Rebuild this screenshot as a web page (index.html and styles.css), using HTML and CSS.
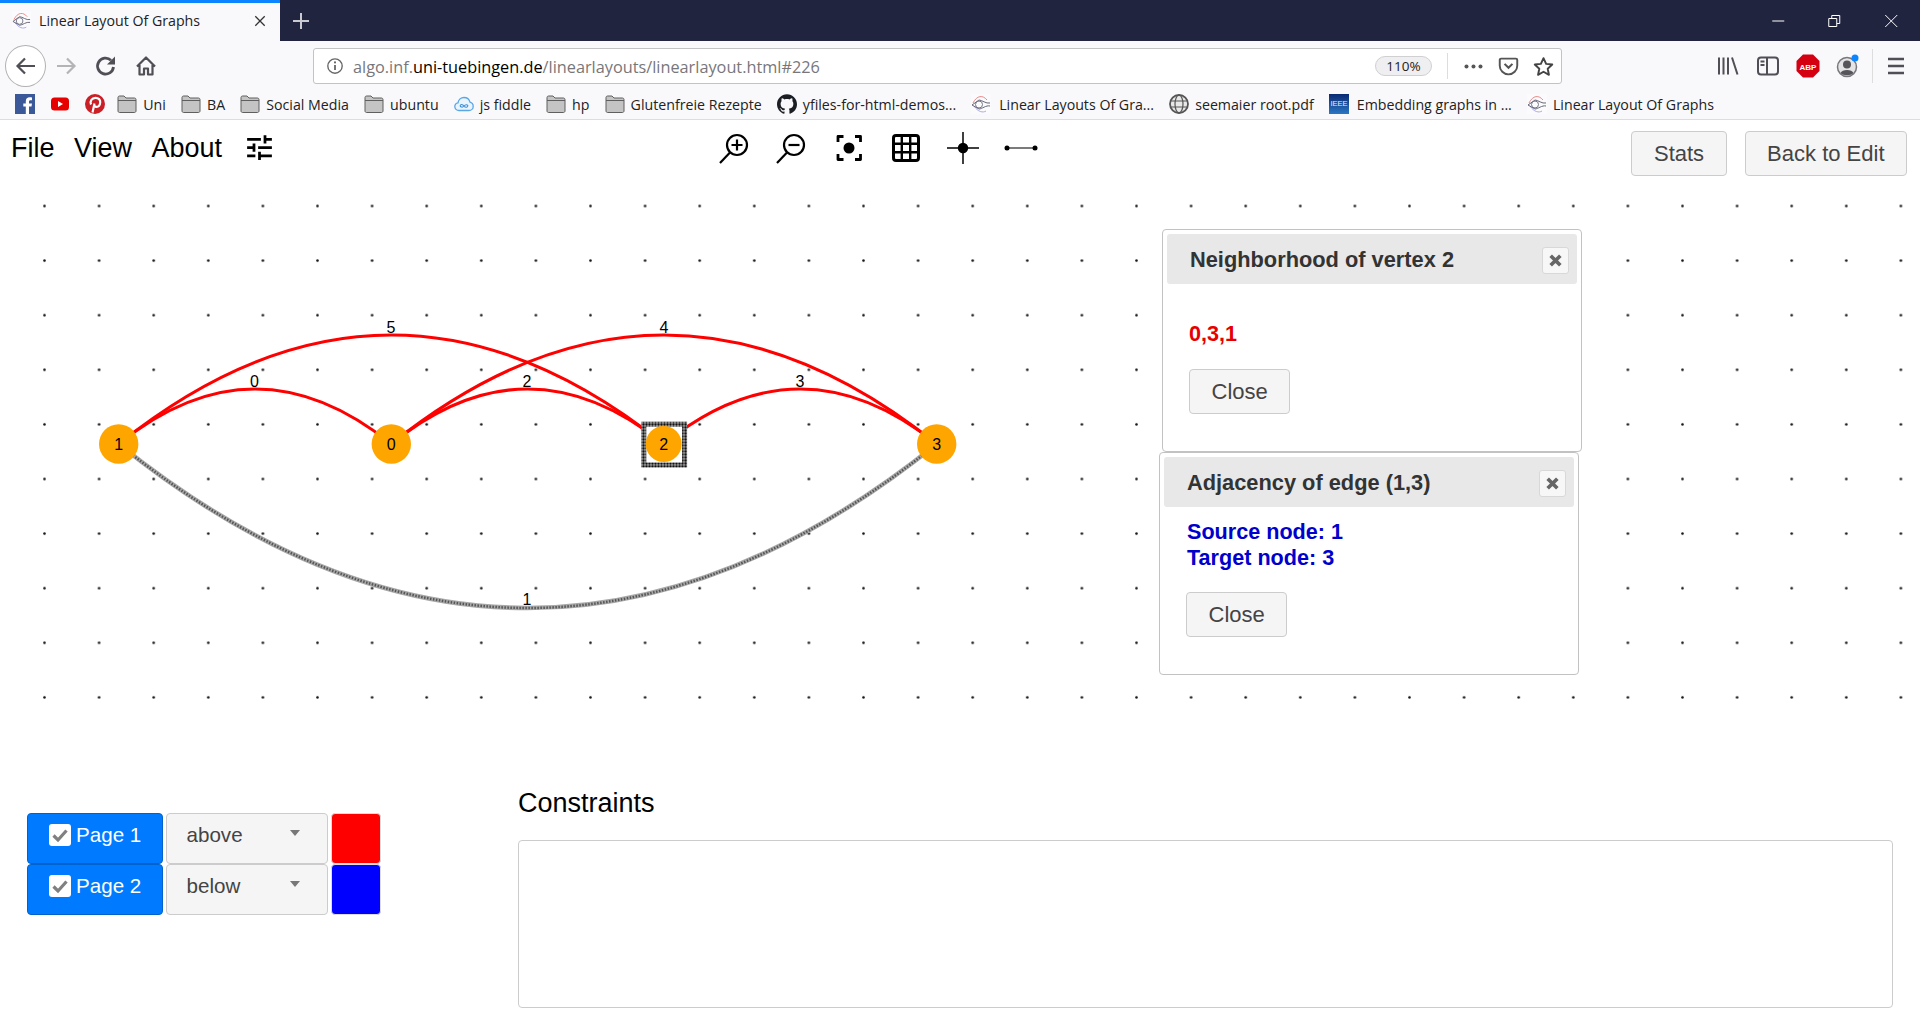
FILE: index.html
```html
<!DOCTYPE html>
<html lang="en">

<head>
    <meta charset="UTF-8">
    <meta name="viewport" content="width=device-width, initial-scale=1.0">
    <title>Linear Layout Of Graphs</title>
    <link rel="stylesheet" href="styles.css">
</head>

<body>

    <svg class="defs" width="0" height="0">
        <defs>
            <symbol id="favicon" viewBox="0 0 20 20">
                <rect width="20" height="20" fill="#fbfbfd" />
                <path d="M2 9C6 1 12 1 16 6" fill="none" stroke="#e88a8a" stroke-width="1" />
                <path d="M3 12C7 18 12 19 15 17" fill="none" stroke="#a9a9e8" stroke-width="1" />
                <path d="M1 11L8 6M1 11L8 15M8 6C11 6 15 10 19 9M8 15C11 15 15 11 19 12" fill="none" stroke="#667" stroke-width="1" />
                <circle cx="8" cy="10.500" r="3.500" fill="none" stroke="#778" stroke-width="1" />
            </symbol>
            <symbol id="folder" viewBox="0 0 20 20">
                <path d="M1 3.500C1 2.700 1.700 2 2.500 2H7L9 4H17.500C18.300 4 19 4.700 19 5.500V17C19 17.800 18.300 18.500 17.500 18.500H2.500C1.700 18.500 1 17.800 1 17Z" fill="#c4c4c4" stroke="#5f5f5f" stroke-width="1" />
                <path d="M1 6.500H19" stroke="#5f5f5f" stroke-width="1" />
            </symbol>
            <pattern id="selectedBorder" patternUnits="userSpaceOnUse" width="3" height="3">
                <rect width="3" height="3" fill="#999" />
                <circle cx="1.500" cy="1.500" r="1.150" fill="#111" />
            </pattern>
            <pattern id="gridDots" patternUnits="userSpaceOnUse" x="17.200" y="178.700" width="54.600" height="54.600">
                <circle cx="27.300" cy="27.300" r="1.300" fill="#111" />
            </pattern>
            <linearGradient id="ieeeFill" x1="0" y1="0" x2="0" y2="1">
                <stop offset="0" stop-color="#0a2a73" />
                <stop offset="1" stop-color="#2a77c4" />
            </linearGradient>
        </defs>
    </svg>

    <header class="browser">
        <div class="tabbar">
            <div class="tab">
                <svg class="tab-icon"><use href="#favicon" /></svg>
                <span class="tab-title">Linear Layout Of Graphs</span>
                <svg class="tab-close" viewBox="0 0 14 14"><path d="M1.500 1.500L12.500 12.500M12.500 1.500L1.500 12.500" stroke="#333" stroke-width="1.500" /></svg>
            </div>
            <svg class="new-tab" viewBox="0 0 18 18"><path d="M9 1V17M1 9H17" stroke="#c9c9d2" stroke-width="2" /></svg>
            <div class="window-controls">
                <svg viewBox="0 0 14 14"><path d="M1 7H13" stroke="#fff" stroke-width="1" /></svg>
                <svg viewBox="0 0 14 14"><path d="M1.500 4.500H9.500V12.500H1.500ZM4.500 4.500V1.500H12.500V9.500H9.500" fill="none" stroke="#fff" stroke-width="1" /></svg>
                <svg viewBox="0 0 14 14"><path d="M1 1L13 13M13 1L1 13" stroke="#fff" stroke-width="1" /></svg>
            </div>
        </div>

        <div class="navbar">
            <div class="back-btn">
                <svg viewBox="0 0 24 24"><path d="M21 12H4M11 4.500L3.500 12L11 19.500" fill="none" stroke="#4f4f55" stroke-width="2.200" /></svg>
            </div>
            <svg class="nav-icon" viewBox="0 0 24 24"><path d="M3 12H20M13 4.500L20.500 12L13 19.500" fill="none" stroke="#b4b4b8" stroke-width="2.200" /></svg>
            <svg class="nav-icon" viewBox="0 0 24 24"><path d="M19.500 13A8 8 0 1 1 17 6.200" fill="none" stroke="#4f4f55" stroke-width="2.800" /><path d="M21 2.500V10.500H13Z" fill="#4f4f55" /></svg>
            <svg class="nav-icon" viewBox="0 0 24 24"><path d="M3 12.500L12 3.500L21 12.500M5.500 11V20.500H10V14.500H14V20.500H18.500V11" fill="none" stroke="#4f4f55" stroke-width="2.200" stroke-linejoin="round" /></svg>

            <div class="urlbar">
                <svg class="url-info" viewBox="0 0 20 20"><circle cx="10" cy="10" r="8" fill="none" stroke="#666" stroke-width="1.500" /><path d="M10 9V14.500" stroke="#666" stroke-width="2" /><circle cx="10" cy="6" r="1.200" fill="#666" /></svg>
                <span class="url-text">algo.inf.<b>uni-tuebingen.de</b>/linearlayouts/linearlayout.html#226</span>
                <span class="zoom-pill">110%</span>
                <span class="url-sep"></span>
                <svg class="url-icon" viewBox="0 0 24 24"><circle cx="4" cy="12" r="2.300" fill="#555" /><circle cx="12" cy="12" r="2.300" fill="#555" /><circle cx="20" cy="12" r="2.300" fill="#555" /></svg>
                <svg class="url-icon" viewBox="0 0 24 24"><path d="M3.500 3H20.500C21.300 3 22 3.700 22 4.500V11C22 16.500 17.500 21 12 21C6.500 21 2 16.500 2 11V4.500C2 3.700 2.700 3 3.500 3Z" fill="none" stroke="#555" stroke-width="2.200" /><path d="M7.500 9L12 13.500L16.500 9" fill="none" stroke="#555" stroke-width="2.400" /></svg>
                <svg class="url-icon" viewBox="0 0 24 24"><path d="M12 2.500L15 9L22 9.800L16.800 14.500L18.200 21.500L12 18L5.800 21.500L7.200 14.500L2 9.800L9 9Z" fill="none" stroke="#444" stroke-width="2.200" stroke-linejoin="round" /></svg>
            </div>

            <div class="nav-right">
                <svg class="nav-icon" viewBox="0 0 24 24"><path d="M3 3.500V20.500M7.500 3.500V20.500M12 3.500V20.500M16 3.500L21.500 20.500" stroke="#4f4f55" stroke-width="2" /></svg>
                <svg class="nav-icon" viewBox="0 0 24 24"><rect x="2" y="3.500" width="20" height="17" rx="3" fill="none" stroke="#4f4f55" stroke-width="2" /><path d="M11 3.500V20.500" stroke="#4f4f55" stroke-width="2" /><path d="M4.500 7.500H8.500M4.500 11H8.500" stroke="#4f4f55" stroke-width="2" /></svg>
                <svg class="nav-icon" viewBox="0 0 24 24"><path d="M7 .5H17L23.500 7V17L17 23.500H7L.5 17V7Z" fill="#d40012" /><text x="12" y="15.500" class="abp-text">ABP</text></svg>
                <svg class="nav-icon" viewBox="0 0 24 24"><circle cx="11" cy="13" r="9.500" fill="#e4e4e6" stroke="#77777c" stroke-width="1.500" /><circle cx="11" cy="10.500" r="4" fill="#55555a" /><path d="M4.500 19C6 15 16 15 17.500 19C15 22 7 22 4.500 19Z" fill="#55555a" /><circle cx="19" cy="4" r="3.500" fill="#0a84ff" /></svg>
                <span class="nav-sep"></span>
                <svg class="nav-icon" viewBox="0 0 24 24"><path d="M4 5H20M4 12H20M4 19H20" stroke="#4f4f55" stroke-width="2.400" /></svg>
            </div>
        </div>

        <nav class="bookmarks">
            <a class="bm">
                <svg viewBox="0 0 20 20"><rect width="20" height="20" fill="#3b5998" /><path d="M14 20V12.500H16.500L17 9.500H14V7.800C14 6.800 14.500 6.300 15.400 6.300H17V3.500C16.300 3.400 15.500 3.300 14.700 3.300C12.400 3.300 10.800 4.700 10.800 7.300V9.500H8.300V12.500H10.800V20Z" fill="#fff" /></svg>
            </a>
            <a class="bm">
                <svg viewBox="0 0 20 20"><rect x="1" y="3.500" width="18" height="13" rx="3.500" fill="#e60000" /><path d="M8 7V13L13 10Z" fill="#fff" /></svg>
            </a>
            <a class="bm bm-last-icon">
                <svg viewBox="0 0 20 20"><circle cx="10" cy="10" r="10" fill="#cb1f27" /><path d="M7.500 18.500L9.500 9.500M6 10.500C4.500 7 7 3.800 10.500 3.800C13.500 3.800 15.500 5.800 15.200 8.500C14.900 11.500 13 13 11 12.800C9.800 12.600 9.200 12 9 11" fill="none" stroke="#fff" stroke-width="2.200" /></svg>
            </a>
            <a class="bm"><svg><use href="#folder" /></svg>Uni</a>
            <a class="bm"><svg><use href="#folder" /></svg>BA</a>
            <a class="bm"><svg><use href="#folder" /></svg>Social Media</a>
            <a class="bm"><svg><use href="#folder" /></svg>ubuntu</a>
            <a class="bm">
                <svg viewBox="0 0 20 20"><path d="M5 16.500C2.500 16.500 .8 14.800 .8 12.600C.8 10.700 2.200 9.200 4 8.900C4.300 5.700 7 3.500 10 3.500C13 3.500 15.300 5.500 16 8.200C17.900 8.700 19.200 10.400 19.200 12.400C19.200 14.800 17.300 16.500 15 16.500Z" fill="#eaf4fd" stroke="#5aa7e6" stroke-width="1.300" /><path d="M10 12C8.500 10 6.500 10 6.200 11.500C6 13 8.500 14 10 12C11.500 10 14 10.500 13.800 12C13.500 13.500 11.500 14 10 12Z" fill="none" stroke="#3f8fd6" stroke-width="1.100" /></svg>
                js fiddle
            </a>
            <a class="bm"><svg><use href="#folder" /></svg>hp</a>
            <a class="bm"><svg><use href="#folder" /></svg>Glutenfreie Rezepte</a>
            <a class="bm">
                <svg viewBox="0 0 24 24"><path fill="#1b1f23" d="M12 .297c-6.630 0-12 5.373-12 12 0 5.303 3.438 9.800 8.205 11.385.6.113.82-.258.82-.577 0-.285-.01-1.040-.015-2.040-3.338.724-4.042-1.610-4.042-1.610C4.422 18.070 3.633 17.700 3.633 17.700c-1.087-.744.084-.729.084-.729 1.205.084 1.838 1.236 1.838 1.236 1.070 1.835 2.809 1.305 3.495.998.108-.776.417-1.305.76-1.605-2.665-.3-5.466-1.332-5.466-5.930 0-1.310.465-2.380 1.235-3.220-.135-.303-.54-1.523.105-3.176 0 0 1.005-.322 3.300 1.230.96-.267 1.980-.399 3-.405 1.020.006 2.040.138 3 .405 2.280-1.552 3.285-1.230 3.285-1.230.645 1.653.24 2.873.12 3.176.765.84 1.230 1.910 1.230 3.220 0 4.610-2.805 5.625-5.475 5.920.42.36.81 1.096.81 2.220 0 1.606-.015 2.896-.015 3.286 0 .315.21.69.825.57C20.565 22.092 24 17.592 24 12.297c0-6.627-5.373-12-12-12" /></svg>
                yfiles-for-html-demos...
            </a>
            <a class="bm bm-wide"><svg><use href="#favicon" /></svg>Linear Layouts Of Gra...</a>
            <a class="bm">
                <svg viewBox="0 0 20 20"><circle cx="10" cy="10" r="9" fill="#e8e8e8" stroke="#555" stroke-width="1.800" /><ellipse cx="10" cy="10" rx="4" ry="9" fill="none" stroke="#555" stroke-width="1.200" /><path d="M1.500 7H18.500M1.500 13H18.500" stroke="#555" stroke-width="1.200" /></svg>
                seemaier root.pdf
            </a>
            <a class="bm bm-wide">
                <svg viewBox="0 0 20 20"><rect width="20" height="20" fill="url(#ieeeFill)" /><text x="10" y="12" class="ieee-text">IEEE</text></svg>
                Embedding graphs in ...
            </a>
            <a class="bm"><svg><use href="#favicon" /></svg>Linear Layout Of Graphs</a>
        </nav>
    </header>

    <div class="app-toolbar">
        <div class="menu">
            <span>File</span>
            <span>View</span>
            <span>About</span>
            <svg class="tune" viewBox="0 0 24 24"><path d="M3 17v2h6v-2H3zM3 5v2h10V5H3zm10 16v-2h8v-2h-8v-2h-2v6h2zM7 9v2H3v2h4v2h2V9H7zm14 4v-2H11v2h10zm-6-4h2V7h4V5h-4V3h-2v6z" /></svg>
        </div>

        <div class="tools">
            <svg viewBox="0 0 36 36"><circle cx="20" cy="15" r="10" fill="none" stroke="#000" stroke-width="2.200" /><path d="M3 33L13 22.500" stroke="#000" stroke-width="2.200" /><path d="M20 9.500V20.500M14.500 15H25.500" stroke="#000" stroke-width="2.200" /></svg>
            <svg viewBox="0 0 36 36"><circle cx="20" cy="15" r="10" fill="none" stroke="#000" stroke-width="2.200" /><path d="M3 33L13 22.500" stroke="#000" stroke-width="2.200" /><path d="M14.500 15H25.500" stroke="#000" stroke-width="2.200" /></svg>
            <svg viewBox="0 0 36 36"><path d="M7 12V6.500H12.500M24 6.500H29.500V12M29.500 24V29.500H24M12.500 29.500H7V24" fill="none" stroke="#000" stroke-width="2.800" stroke-linejoin="round" /><circle cx="18" cy="18" r="5.500" /></svg>
            <svg viewBox="0 0 36 36"><rect x="5.500" y="5.500" width="25" height="25" rx="2.500" fill="none" stroke="#000" stroke-width="3" /><path d="M13.800 5.500V30.500M22.200 5.500V30.500M5.500 13.800H30.500M5.500 22.200H30.500" stroke="#000" stroke-width="2.400" /></svg>
            <svg viewBox="0 0 36 36"><path d="M18 2V34M2 18H34" stroke="#000" stroke-width="1.500" /><circle cx="18" cy="18" r="5.200" /></svg>
            <svg viewBox="0 0 36 36"><path d="M5 18H33" stroke="#333" stroke-width="1.300" /><circle cx="5" cy="18" r="2.500" /><circle cx="33" cy="18" r="2.500" /></svg>
        </div>

        <div class="actions">
            <button class="btn">Stats</button>
            <button class="btn">Back to Edit</button>
        </div>
    </div>

    <main class="canvas">
        <svg class="graph" viewBox="0 180 1920 560">
            <rect x="30" y="190" width="1880" height="520" fill="url(#gridDots)" />

            <path class="edge" d="M118.700 444Q255 334 391.300 444" />
            <path class="edge" d="M118.700 444Q391.200 226 663.700 444" />
            <path class="edge" d="M391.300 444Q527.500 334 663.700 444" />
            <path class="edge" d="M391.300 444Q664 226 936.700 444" />
            <path class="edge" d="M663.700 444Q800 334 936.700 444" />
            <path class="edge-selected" d="M118.700 444Q527.700 772 936.700 444" />
            <path class="edge-selected-inner" d="M118.700 444Q527.700 772 936.700 444" />

            <text class="graph-label" x="391" y="333">5</text>
            <text class="graph-label" x="254.500" y="387">0</text>
            <text class="graph-label" x="527" y="387">2</text>
            <text class="graph-label" x="664" y="333">4</text>
            <text class="graph-label" x="800" y="387">3</text>
            <text class="graph-label" x="527" y="605">1</text>

            <circle class="node" cx="118.700" cy="444" r="19.700" />
            <circle class="node" cx="391.300" cy="444" r="19.700" />
            <rect class="node-selected" x="643.800" y="424.200" width="40.800" height="40.800" />
            <circle class="node" cx="663.700" cy="444" r="18" />
            <circle class="node" cx="936.700" cy="444" r="19.700" />

            <text class="graph-label" x="118.700" y="450">1</text>
            <text class="graph-label" x="391.300" y="450">0</text>
            <text class="graph-label" x="663.700" y="450">2</text>
            <text class="graph-label" x="936.700" y="450">3</text>
        </svg>

        <section class="dialog dialog-neighbors">
            <div class="dialog-head">
                <h3>Neighborhood of vertex 2</h3>
                <span class="dialog-x"><svg viewBox="0 0 14 14"><path d="M2.500 2.500L11.500 11.500M11.500 2.500L2.500 11.500" stroke="#666" stroke-width="3.400" /></svg></span>
            </div>
            <div class="dialog-body body-spaced">
                <p class="info-red">0,3,1</p>
                <button class="btn">Close</button>
            </div>
        </section>

        <section class="dialog dialog-adjacency">
            <div class="dialog-head">
                <h3>Adjacency of edge (1,3)</h3>
                <span class="dialog-x"><svg viewBox="0 0 14 14"><path d="M2.500 2.500L11.500 11.500M11.500 2.500L2.500 11.500" stroke="#666" stroke-width="3.400" /></svg></span>
            </div>
            <div class="dialog-body">
                <p class="info-blue">Source node: 1<br>Target node: 3</p>
                <button class="btn">Close</button>
            </div>
        </section>
    </main>

    <div class="bottom">
        <div class="pages">
            <div class="page-row">
                <div class="page-toggle">
                    <span class="check"><svg viewBox="0 0 22 22"><path d="M4.500 11.500L9 16L17.500 6.500" fill="none" stroke="#808080" stroke-width="3.200" /></svg></span>
                    Page 1
                </div>
                <div class="page-select">above<span class="caret"></span></div>
                <div class="swatch swatch-red"></div>
            </div>
            <div class="page-row">
                <div class="page-toggle">
                    <span class="check"><svg viewBox="0 0 22 22"><path d="M4.500 11.500L9 16L17.500 6.500" fill="none" stroke="#808080" stroke-width="3.200" /></svg></span>
                    Page 2
                </div>
                <div class="page-select">below<span class="caret"></span></div>
                <div class="swatch swatch-blue"></div>
            </div>
        </div>

        <div class="constraints">
            <h2>Constraints</h2>
            <textarea></textarea>
        </div>
    </div>

</body>

</html>
```

FILE: styles.css
```css
* {
    box-sizing: border-box;
}

html,
body {
    height: 100%;
}

body {
    margin: 0;
    overflow: hidden;
    background-color: #fff;
    font-family: "Liberation Sans", Arial, sans-serif;
    color: #000;
}

.defs {
    position: absolute;
}

/* browser chrome */

.browser {
    background-color: #f9f9fb;
    border-bottom: 1px solid #ddd;
    height: 120px;
    font-family: "Open Sans", sans-serif;
}

.tabbar {
    height: 41px;
    background-color: #20243f;
    display: flex;
    align-items: center;
}

.tab {
    width: 280px;
    height: 41px;
    background-color: #f9f9fb;
    border-top: 3px solid #0a84ff;
    display: flex;
    align-items: center;
    padding: 0 14px 3px 12px;
}

.tab-icon {
    width: 19px;
    height: 19px;
    flex: none;
}

.tab-title {
    flex: 1;
    margin-left: 8px;
    font-size: 14.200px;
    color: #222;
}

.tab-close {
    width: 12px;
    height: 12px;
}

.new-tab {
    width: 18px;
    height: 18px;
    margin-left: 12px;
}

.window-controls {
    margin-left: auto;
    display: flex;
    padding-right: 1px;
}

.window-controls svg {
    width: 56.500px;
    height: 14px;
}

.navbar {
    height: 50px;
    display: flex;
    align-items: center;
    padding-left: 5px;
    gap: 16px;
}

.back-btn {
    width: 41px;
    height: 42px;
    border: 1px solid #b1b1b3;
    border-radius: 50%;
    background-color: #fff;
    display: flex;
    align-items: center;
    justify-content: center;
    margin-right: -8px;
}

.back-btn svg {
    width: 24px;
    height: 24px;
}

.nav-icon {
    width: 24px;
    height: 24px;
    flex: none;
}

.urlbar {
    width: 1249px;
    height: 36px;
    margin-left: 139px;
    background-color: #fff;
    border: 1px solid #c3c3c5;
    border-radius: 3px;
    display: flex;
    align-items: center;
    padding-left: 12px;
}

.url-info {
    width: 18px;
    height: 18px;
}

.url-text {
    margin-left: 9px;
    padding-top: 2px;
    font-size: 16.300px;
    color: #77777a;
    flex: 1;
}

.url-text b {
    font-weight: 400;
    color: #000;
}

.zoom-pill {
    width: 57px;
    height: 20px;
    line-height: 19px;
    text-align: center;
    font-size: 13.500px;
    border: 1px solid #d0d0d2;
    border-radius: 10px;
    background-color: #efeff1;
    color: #222;
}

.url-sep {
    width: 1px;
    height: 26px;
    background-color: #ddd;
    margin: 0 15px;
}

.url-icon {
    width: 21px;
    height: 21px;
    margin-right: 14px;
}

.url-icon:last-child {
    margin-right: 7px;
}

.nav-right {
    display: flex;
    align-items: center;
    gap: 16px;
    margin-left: auto;
    padding-right: 12px;
}

.nav-sep {
    width: 1px;
    height: 34px;
    background-color: #ddd;
    margin: 0 -5px 0 -4px;
}

.abp-text {
    font-family: "Liberation Sans", sans-serif;
    font-size: 8px;
    font-weight: 700;
    fill: #fff;
    text-anchor: middle;
}

.ieee-text {
    font-family: "Liberation Sans", sans-serif;
    font-size: 7.500px;
    fill: #e6ecff;
    text-anchor: middle;
}

.bookmarks {
    height: 28px;
    display: flex;
    align-items: center;
    padding: 0 0 2px 15px;
    gap: 15.100px;
}

.bm {
    display: flex;
    align-items: center;
    gap: 6px;
    font-size: 14.200px;
    color: #222;
    white-space: nowrap;
}

.bm svg {
    width: 20px;
    height: 20px;
    flex: none;
}

.bm-wide {
    gap: 8px;
}

.bm-last-icon {
    margin-right: -3px;
}

/* app toolbar */

.app-toolbar {
    height: 60px;
    display: grid;
    grid-template-columns: 717px 1fr auto;
    align-items: start;
}

.menu {
    display: flex;
    align-items: center;
    gap: 19.500px;
    padding: 11px 0 0 11px;
    font-size: 27px;
    line-height: 32px;
}

.tune {
    width: 33px;
    height: 33px;
    margin-left: 1px;
}

.tools {
    display: flex;
    gap: 21px;
    margin-top: 10px;
}

.tools svg {
    width: 36px;
    height: 36px;
}

.actions {
    display: flex;
    gap: 18px;
    margin-top: 11px;
    padding-right: 13px;
}

.btn {
    height: 44.500px;
    padding: 2px 21.500px 0;
    font-family: "Liberation Sans", Arial, sans-serif;
    font-size: 22px;
    color: #444;
    background-color: #f5f5f5;
    border: 1px solid #ccc;
    border-radius: 4px;
}

/* graph canvas */

.canvas {
    position: relative;
    height: 560px;
}

.graph {
    display: block;
    width: 1920px;
    height: 560px;
}

.edge {
    fill: none;
    stroke: #f00;
    stroke-width: 3;
}

.edge-selected {
    fill: none;
    stroke: #a8a8a8;
    stroke-width: 4.500;
}

.edge-selected-inner {
    fill: none;
    stroke: #555;
    stroke-width: 2.500;
    stroke-dasharray: 1.500 1.500;
}

.graph-label {
    font-size: 16px;
    text-anchor: middle;
    fill: #000;
}

.node {
    fill: #ffa500;
}

.node-selected {
    fill: #fff;
    stroke: url(#selectedBorder);
    stroke-width: 5;
}

.dialog {
    position: absolute;
    width: 420px;
    height: 223px;
    padding: 4px;
    background-color: #fff;
    border: 1px solid #c2c2c2;
    border-radius: 4px;
}

.dialog-neighbors {
    left: 1162px;
    top: 49px;
}

.dialog-adjacency {
    left: 1159px;
    top: 272px;
}

.dialog-head {
    height: 50px;
    padding: 2px 8px 0 23px;
    display: flex;
    align-items: center;
    justify-content: space-between;
    background-color: #e8e8e8;
    border-radius: 3px;
}

.dialog-head h3 {
    margin: 0;
    font-size: 21.800px;
    font-weight: 700;
    color: #333;
}

.dialog-x {
    width: 27px;
    height: 27px;
    display: flex;
    align-items: center;
    justify-content: center;
    background-color: #f7f7f7;
    border: 1px solid #d8d8d8;
    border-radius: 3px;
}

.dialog-x svg {
    width: 15px;
    height: 15px;
}

.dialog-body {
    padding: 12px 0 0 22px;
}

.body-spaced {
    padding-top: 37px;
}

.dialog-body p {
    margin: 0 0 22px;
    font-size: 21.600px;
    line-height: 26px;
    font-weight: 700;
}

.info-red {
    color: #e60000;
}

.dialog-body .info-blue {
    color: #0000cd;
    padding-left: 1px;
    margin-bottom: 21px;
}

/* pages and constraints */

.bottom {
    display: flex;
    padding: 0 27px;
}

.pages {
    width: 491px;
    padding-top: 73px;
    display: flex;
    flex-direction: column;
    gap: 0.500px;
}

.page-row {
    display: flex;
    gap: 2.500px;
    height: 50.500px;
}

.page-toggle {
    width: 136px;
    display: flex;
    align-items: center;
    gap: 5px;
    padding: 0 0 7px 21px;
    font-size: 20.600px;
    color: #fff;
    background-color: #007bff;
    border: 1px solid #0062cc;
    border-radius: 4px;
}

.check {
    width: 22px;
    height: 22px;
    background-color: #fff;
    border-radius: 3px;
}

.check svg {
    display: block;
}

.page-select {
    position: relative;
    width: 162.500px;
    display: flex;
    align-items: center;
    padding: 0 0 7px 20px;
    font-size: 20.600px;
    color: #444;
    background-color: #f5f5f5;
    border: 1px solid #ccc;
    border-radius: 4px;
}

.caret {
    position: absolute;
    left: 123px;
    top: 16px;
    border-top: 6px solid #777;
    border-left: 5px solid transparent;
    border-right: 5px solid transparent;
}

.swatch {
    width: 50px;
    border-radius: 4px;
    border: 1px solid #ddd;
}

.swatch-red {
    background-color: #f00;
}

.swatch-blue {
    background-color: #00f;
}

.constraints {
    flex: 1;
    padding-top: 47px;
}

.constraints h2 {
    margin: 0 0 21px;
    font-size: 27px;
    line-height: 32px;
    font-weight: 400;
}

.constraints textarea {
    display: block;
    width: 100%;
    height: 168px;
    border: 1px solid #ccc;
    border-radius: 4px;
    resize: none;
}
```
